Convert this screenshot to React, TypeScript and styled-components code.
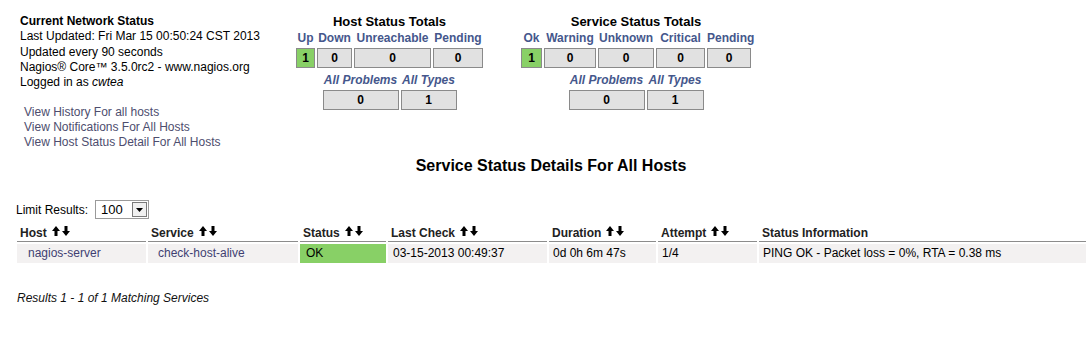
import React from 'react'
import styled, { createGlobalStyle } from 'styled-components'

const GlobalStyle = createGlobalStyle`
  body {
    margin: 0;
    background: #ffffff;
    font-family: 'Liberation Sans', Arial, sans-serif;
    font-size: 12px;
    color: #000000;
  }
`

const Page = styled.div`
  padding: 14px 3px 20px 0;
`

const TopSection = styled.div`
  display: flex;
  align-items: flex-start;
`

const InfoBox = styled.div`
  width: 276px;
  padding-left: 20px;
  line-height: 15.3px;
`

const InfoTitle = styled.div`
  font-weight: bold;
`

const InfoLine = styled.div``

const NavLinks = styled.div`
  margin-top: 15px;
  padding-left: 4px;
  line-height: 15px;
`

const NavLink = styled.a`
  display: block;
  color: #4d4d6e;
  text-decoration: none;
`

const TotalsBlock = styled.div<{ $offset: number }>`
  display: flex;
  flex-direction: column;
  align-items: center;
  margin-left: ${({ $offset }) => $offset}px;
`

const TotalsTitle = styled.div`
  font-size: 13px;
  font-weight: bold;
  line-height: 15px;
  margin-bottom: 2px;
`

const TotalsGrid = styled.div<{ $cols: string }>`
  display: grid;
  grid-template-columns: ${({ $cols }) => $cols};
  grid-template-rows: 15px 20px;
  column-gap: 2px;
  row-gap: 2px;
  & + & {
    margin-top: 5px;
  }
`

const TotalsLabel = styled.div<{ $italic?: boolean }>`
  font-weight: bold;
  font-style: ${({ $italic }) => ($italic ? 'italic' : 'normal')};
  color: #45578c;
  text-align: center;
  white-space: nowrap;
  line-height: 15px;
`

const TotalsCell = styled.div<{ $ok?: boolean }>`
  box-sizing: border-box;
  height: 20px;
  border: 1px solid #8a8a8a;
  background: ${({ $ok }) => ($ok ? '#88d066' : '#e1e1e1')};
  font-weight: bold;
  text-align: center;
  line-height: 18px;
`

const DetailTitle = styled.div`
  margin-top: 7px;
  padding-left: 16px;
  text-align: center;
  font-size: 16px;
  font-weight: bold;
  line-height: 18px;
`

const LimitRow = styled.div`
  display: flex;
  align-items: center;
  gap: 7px;
  margin-top: 25px;
  padding-left: 16px;
`

const FakeSelect = styled.div`
  box-sizing: border-box;
  width: 54px;
  height: 19px;
  border: 1px solid #9a9a9a;
  display: flex;
  align-items: center;
  justify-content: space-between;
  padding: 0 1px 0 5px;
  font-size: 13px;
`

const SelectButton = styled.div`
  box-sizing: border-box;
  width: 15px;
  height: 15px;
  border: 1px solid #7a7a7a;
  background: #f0f0f0;
  display: flex;
  align-items: center;
  justify-content: center;
`

const StatusTable = styled.div`
  display: grid;
  grid-template-columns: 129px 150px 86px 159px 107px 99px 1fr;
  column-gap: 2px;
  row-gap: 2px;
  margin: 6px 0 0 17px;
`

const HeadCell = styled.div`
  display: flex;
  align-items: flex-start;
  gap: 5px;
  padding: 1px 3px 0 3px;
  height: 15px;
  line-height: 15px;
  font-weight: bold;
  color: #222222;
  border-bottom: 1px solid #8c8c8c;
`

const DataCell = styled.div<{ $status?: boolean; $indent?: number }>`
  height: 19px;
  line-height: 19px;
  padding-left: ${({ $indent }) => $indent ?? 4}px;
  background: ${({ $status }) => ($status ? '#88d066' : '#f3f1f1')};
  white-space: nowrap;
`

const CellLink = styled.a`
  color: #3f3f72;
  text-decoration: none;
`

const ResultsNote = styled.div`
  margin: 28px 0 0 17px;
  font-size: 12px;
  font-style: italic;
  line-height: 14px;
  color: #111111;
`

const SortArrows = () => (
  <svg width="20" height="11" viewBox="0 0 20 11" style={{ marginTop: 0 }}>
    <polygon points="0,5 4,0 8,5 5.5,5 5.5,10 2.5,10 2.5,5" fill="#000" />
    <polygon points="12.5,0 15.5,0 15.5,5 18,5 14,10 10,5 12.5,5" fill="#000" />
  </svg>
)

const hostTotals = [
  { label: 'Up', value: 1, ok: true },
  { label: 'Down', value: 0 },
  { label: 'Unreachable', value: 0 },
  { label: 'Pending', value: 0 },
]

const serviceTotals = [
  { label: 'Ok', value: 1, ok: true },
  { label: 'Warning', value: 0 },
  { label: 'Unknown', value: 0 },
  { label: 'Critical', value: 0 },
  { label: 'Pending', value: 0 },
]

const columns = ['Host', 'Service', 'Status', 'Last Check', 'Duration', 'Attempt', 'Status Information']

const Totals = ({
  title,
  items,
  cols,
  subCols,
  offset,
}: {
  title: string
  items: { label: string; value: number; ok?: boolean }[]
  cols: string
  subCols: string
  offset: number
}) => (
  <TotalsBlock $offset={offset}>
    <TotalsTitle>{title}</TotalsTitle>
    <TotalsGrid $cols={cols}>
      {items.map((item) => (
        <TotalsLabel key={item.label}>{item.label}</TotalsLabel>
      ))}
      {items.map((item) => (
        <TotalsCell key={item.label} $ok={item.ok}>
          {item.value}
        </TotalsCell>
      ))}
    </TotalsGrid>
    <TotalsGrid $cols={subCols}>
      <TotalsLabel $italic>All Problems</TotalsLabel>
      <TotalsLabel $italic>All Types</TotalsLabel>
      <TotalsCell>0</TotalsCell>
      <TotalsCell>1</TotalsCell>
    </TotalsGrid>
  </TotalsBlock>
)

const App = () => (
  <Page>
    <GlobalStyle />
    <TopSection>
      <InfoBox>
        <InfoTitle>Current Network Status</InfoTitle>
        <InfoLine>Last Updated: Fri Mar 15 00:50:24 CST 2013</InfoLine>
        <InfoLine>Updated every 90 seconds</InfoLine>
        <InfoLine>Nagios® Core™ 3.5.0rc2 - www.nagios.org</InfoLine>
        <InfoLine>
          Logged in as <i>cwtea</i>
        </InfoLine>
        <NavLinks>
          <NavLink href="#">View History For all hosts</NavLink>
          <NavLink href="#">View Notifications For All Hosts</NavLink>
          <NavLink href="#">View Host Status Detail For All Hosts</NavLink>
        </NavLinks>
      </InfoBox>
      <Totals title="Host Status Totals" items={hostTotals} cols="19px 35px 77px 50px" subCols="76px 56px" offset={0} />
      <Totals
        title="Service Status Totals"
        items={serviceTotals}
        cols="21px 52px 56px 49px 44px"
        subCols="76px 57px"
        offset={38}
      />
    </TopSection>

    <DetailTitle>Service Status Details For All Hosts</DetailTitle>

    <LimitRow>
      <span>Limit Results:</span>
      <FakeSelect>
        <span>100</span>
        <SelectButton>
          <svg width="7" height="4" viewBox="0 0 7 4">
            <polygon points="0,0 7,0 3.5,4" fill="#000" />
          </svg>
        </SelectButton>
      </FakeSelect>
    </LimitRow>

    <StatusTable>
      {columns.map((col) => (
        <HeadCell key={col}>
          {col}
          {col !== 'Status Information' && <SortArrows />}
        </HeadCell>
      ))}
      <DataCell $indent={11}>
        <CellLink href="#">nagios-server</CellLink>
      </DataCell>
      <DataCell $indent={10}>
        <CellLink href="#">check-host-alive</CellLink>
      </DataCell>
      <DataCell $status $indent={6}>
        OK
      </DataCell>
      <DataCell $indent={5}>03-15-2013 00:49:37</DataCell>
      <DataCell>0d 0h 6m 47s</DataCell>
      <DataCell>1/4</DataCell>
      <DataCell>PING OK - Packet loss = 0%, RTA = 0.38 ms</DataCell>
    </StatusTable>

    <ResultsNote>Results 1 - 1 of 1 Matching Services</ResultsNote>
  </Page>
)

export default App
